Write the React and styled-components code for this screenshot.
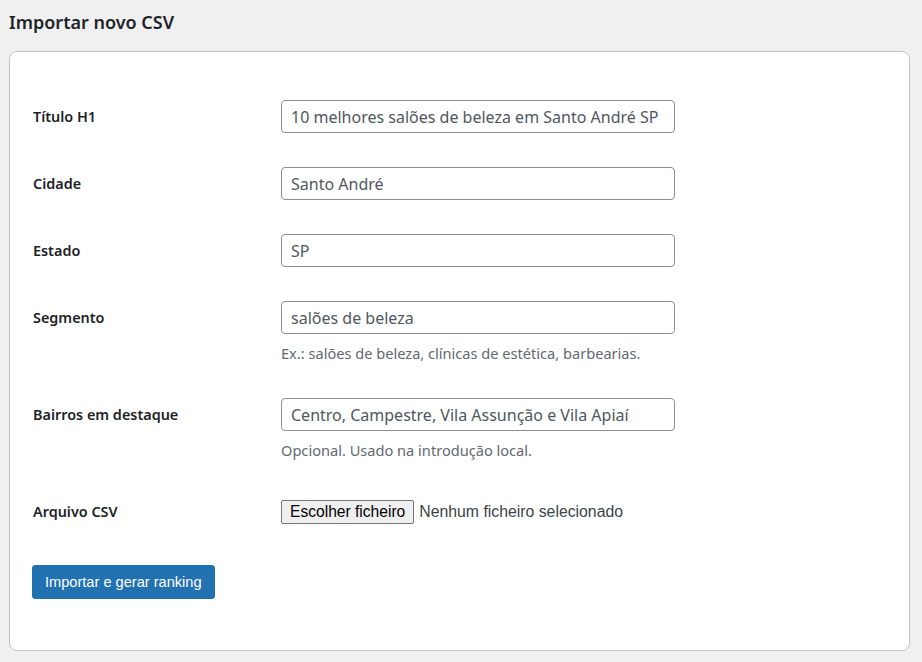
import React from 'react';
import styled, { createGlobalStyle } from 'styled-components';

const GlobalStyle = createGlobalStyle`
  html, body {
    margin: 0;
    padding: 0;
    background: #f0f0f1;
    font-family: 'Noto Sans', 'Open Sans', sans-serif;
    color: #1d2327;
  }
`;

const Page = styled.div`
  padding: 9px 12px 10px 9px;
`;

const Title = styled.h2`
  margin: 0 0 16px 0;
  font-size: 18px;
  font-weight: 600;
  line-height: 26px;
  color: #1d2327;
`;

const Card = styled.div`
  background: #fff;
  border: 1px solid #c3c4c7;
  border-radius: 8px;
  padding: 31px 24px 51px 22px;
`;

const FormTable = styled.div`
  display: flex;
  flex-direction: column;
`;

const Row = styled.div`
  display: grid;
  grid-template-columns: 249px 394px;
  align-items: start;
  padding: 17px 0;
`;

const Label = styled.label`
  padding-left: 1px;
  font-size: 14.4px;
  font-weight: 600;
  line-height: 33px;
  color: #1d2327;
`;

const Field = styled.div`
  display: flex;
  flex-direction: column;
`;

const Input = styled.input`
  box-sizing: border-box;
  width: 394px;
  height: 33px;
  padding: 0 9px;
  border: 1px solid #8c8f94;
  border-radius: 4px;
  font-family: inherit;
  font-size: 16px;
  color: #50575e;
  background: #fff;
  outline: none;
`;

const Description = styled.p`
  margin: 8px 0 0;
  font-size: 14.6px;
  line-height: 22px;
  color: #646970;
`;

const FileWrap = styled.div`
  display: flex;
  align-items: center;
  height: 33px;
  gap: 5px;
`;

const FileButton = styled.button`
  font-family: 'Liberation Sans', Arial, sans-serif;
  font-size: 15.6px;
  height: 24px;
  padding: 0 8px;
  background: #efefef;
  border: 1px solid #767676;
  border-radius: 2px;
  color: #000;
`;

const FileName = styled.span`
  font-family: 'Liberation Sans', Arial, sans-serif;
  font-size: 15.8px;
  color: #3c434a;
`;

const Submit = styled.button`
  margin-top: 20px;
  align-self: flex-start;
  height: 34px;
  padding: 0 12px;
  background: #2271b1;
  border: 1px solid #2271b1;
  border-radius: 3px;
  color: #fff;
  font-family: 'Liberation Sans', Arial, sans-serif;
  font-size: 14.6px;
`;

export default function App() {
  return (
    <Page>
      <GlobalStyle />
      <Title>Importar novo CSV</Title>
      <Card>
        <FormTable>
          <Row>
            <Label>Título H1</Label>
            <Input defaultValue="10 melhores salões de beleza em Santo André SP" />
          </Row>
          <Row>
            <Label>Cidade</Label>
            <Input defaultValue="Santo André" />
          </Row>
          <Row>
            <Label>Estado</Label>
            <Input defaultValue="SP" />
          </Row>
          <Row>
            <Label>Segmento</Label>
            <Field>
              <Input defaultValue="salões de beleza" />
              <Description>Ex.: salões de beleza, clínicas de estética, barbearias.</Description>
            </Field>
          </Row>
          <Row>
            <Label>Bairros em destaque</Label>
            <Field>
              <Input defaultValue="Centro, Campestre, Vila Assunção e Vila Apiaí" />
              <Description>Opcional. Usado na introdução local.</Description>
            </Field>
          </Row>
          <Row>
            <Label>Arquivo CSV</Label>
            <FileWrap>
              <FileButton type="button">Escolher ficheiro</FileButton>
              <FileName>Nenhum ficheiro selecionado</FileName>
            </FileWrap>
          </Row>
          <Submit type="button">Importar e gerar ranking</Submit>
        </FormTable>
      </Card>
    </Page>
  );
}
